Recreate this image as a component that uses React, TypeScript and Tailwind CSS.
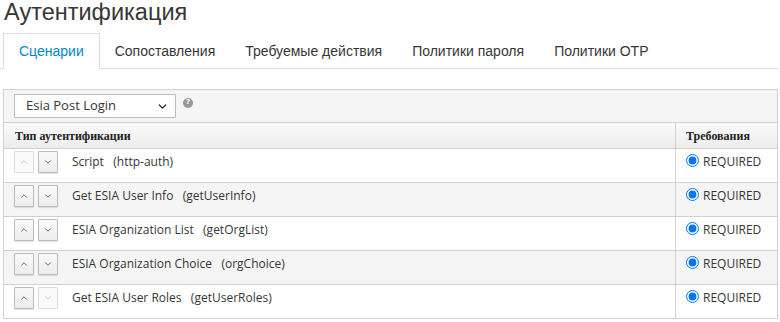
import { ChevronDown, ChevronUp } from 'lucide-react';

const tabs = ['Сценарии', 'Сопоставления', 'Требуемые действия', 'Политики пароля', 'Политики OTP'];

const executions = [
	{ name: 'Script', alias: 'http-auth' },
	{ name: 'Get ESIA User Info', alias: 'getUserInfo' },
	{ name: 'ESIA Organization List', alias: 'getOrgList' },
	{ name: 'ESIA Organization Choice', alias: 'orgChoice' },
	{ name: 'Get ESIA User Roles', alias: 'getUserRoles' },
];

function MoveButton({ dir, disabled }: { dir: 'up' | 'down'; disabled?: boolean }) {
	const Icon = dir === 'up' ? ChevronUp : ChevronDown;
	return (
		<button
			type="button"
			className={
				disabled
					? 'flex h-[22px] w-5 items-center justify-center rounded-[1px] border border-[#ddd] bg-[#fafafa] text-[#bbb]'
					: 'flex h-[22px] w-5 items-center justify-center rounded-[1px] border border-[#bbb] bg-gradient-to-b from-[#fafafa] to-[#ededed] text-[#4d5258] shadow-[0_1px_1px_rgba(0,0,0,0.12)]'
			}
		>
			<Icon size={10} strokeWidth={2} />
		</button>
	);
}

export default function App() {
	return (
		<div className="w-[780px] bg-white pl-[3px] pr-[2px] text-[#363636]">
			<h1 className="h-[33px] pl-px font-['Liberation_Sans',Arial,sans-serif] text-[23.5px] leading-[25px]">
				Аутентификация
			</h1>

			<div className="-ml-[3px] flex h-9 border-b border-[#ddd] pl-[3px] font-['Liberation_Sans',Arial,sans-serif] text-[14px]">
				{tabs.map((tab, i) => (
					<div
						key={tab}
						className={
							i === 0
								? '-mb-px flex h-9 items-center border border-b-white border-[#ddd] bg-white px-[15px] text-[#0088ce]'
								: 'flex h-9 items-center px-[15px] text-[#363636]'
						}
					>
						{tab}
					</div>
				))}
			</div>

			<div className="mt-5 border border-[#d1d1d1] font-['Open_Sans',sans-serif] text-[12px]">
				<div className="flex h-[32px] items-center gap-[7px] bg-[#f5f5f5] pl-[10px]">
					<div className="flex h-6 w-[162px] items-center justify-between rounded-[1px] border border-[#bbb] bg-white pl-[11px] pr-[6px] text-[13px] text-[#363636]">
						<span>Esia Post Login</span>
						<ChevronDown size={13} strokeWidth={2.5} className="text-[#222]" />
					</div>
					<span className="-mt-[7px] flex h-[10px] w-[10px] items-center justify-center rounded-full bg-[#999] font-['DejaVu_Sans',sans-serif] text-[7px] font-bold leading-none text-white">
						?
					</span>
				</div>

				<div className="flex h-[26px] border-t border-[#d1d1d1] bg-gradient-to-b from-[#fafafa] to-[#ededed] font-['Liberation_Serif','Times_New_Roman',serif] text-[12px] font-bold text-[#222]">
					<div className="flex flex-1 items-center pl-[11px]">Тип аутентификации</div>
					<div className="flex w-[102px] items-center border-l border-[#d1d1d1] pl-[10px]">Требования</div>
				</div>

				{executions.map((ex, i) => (
					<div
						key={ex.alias}
						className={`flex h-[34px] border-t border-[#d1d1d1] ${i % 2 === 1 ? 'bg-[#f5f5f5]' : 'bg-white'}`}
					>
						<div className="flex flex-1 items-start pl-[10px] pt-[2px]">
							<div className="flex gap-[4px]">
								<MoveButton dir="up" disabled={i === 0} />
								<MoveButton dir="down" disabled={i === executions.length - 1} />
							</div>
							<span className="ml-[14px] mt-[2px] whitespace-pre text-[#363636]">
								{ex.name}
								{'\u00a0\u00a0\u00a0'}({ex.alias})
							</span>
						</div>
						<div className="flex w-[102px] items-start gap-[4px] border-l border-[#d1d1d1] pl-[10px] pt-[4px]">
							<input type="radio" checked readOnly className="m-0 mt-[1px] h-[13px] w-[13px]" />
							<span className="text-[#363636]">REQUIRED</span>
						</div>
					</div>
				))}
			</div>
		</div>
	);
}
